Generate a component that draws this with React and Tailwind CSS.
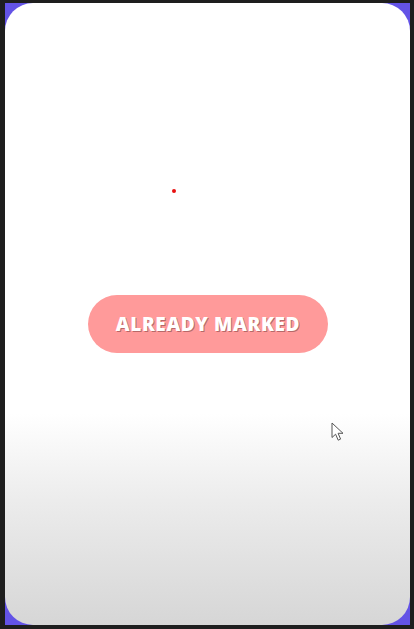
export default function App() {
  return (
    <div className="w-[414px] h-[629px] bg-[#1e1e1e] pt-[3px] pl-[5px] pr-[4px] pb-[4px]">
      <div className="h-full w-full bg-[#6353e6]">
        <div className="relative h-full w-full rounded-[28px] bg-[linear-gradient(to_bottom,#ffffff_0%,#ffffff_66%,#ececec_80%,#d6d6d6_100%)] flex flex-col items-center">
          <span className="absolute left-[167px] top-[186px] w-[4px] h-[4px] rounded-full bg-[#e81010]" />
          <div className="mt-[292px] ml-[1px] w-[240px] h-[58px] rounded-full bg-[#ff9a9a] flex items-center justify-center">
            <span
              className="text-white text-[19px] font-extrabold tracking-[0.6px] [text-shadow:1px_1px_0_rgba(120,60,60,0.55)]"
              style={{ fontFamily: '"Open Sans", "Liberation Sans", sans-serif' }}
            >
              ALREADY MARKED
            </span>
          </div>
          <svg
            className="absolute left-[326px] top-[419px]"
            width="14"
            height="20"
            viewBox="0 0 14 20"
          >
            <path
              d="M1 1 L1 15.5 L4.6 12.2 L7.2 18.2 L9.6 17.1 L7.1 11.3 L12 11.3 Z"
              fill="#ffffff"
              stroke="#555555"
              strokeWidth="1"
              strokeLinejoin="round"
            />
          </svg>
        </div>
      </div>
    </div>
  );
}
